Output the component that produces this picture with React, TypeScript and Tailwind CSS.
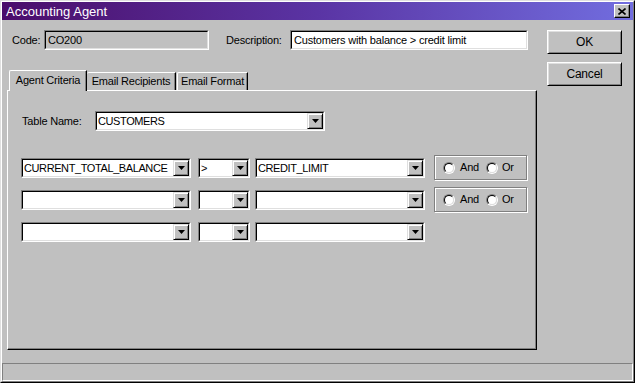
import React from "react";

type BoxProps = {
  className?: string;
  children?: React.ReactNode;
};

const DropButton = () => (
  <div className="flex h-[16px] w-[16px] shrink-0 items-center justify-center border border-t-[#dfdfdf] border-l-[#dfdfdf] border-r-black border-b-black bg-[#c0c0c0] shadow-[inset_1px_1px_0_#fff,inset_-1px_-1px_0_#808080]">
    <svg width="7" height="4" viewBox="0 0 7 4">
      <path d="M0 0h7L3.5 4z" fill="#000" />
    </svg>
  </div>
);

// sunken 2px edge, used for text fields and combos
const Sunken = ({ className, children }: BoxProps) => (
  <div
    className={`h-[20px] shrink-0 border border-t-[#808080] border-l-[#808080] border-r-white border-b-white ${className}`}
  >
    <div className="flex h-full border border-t-black border-l-black border-r-[#dfdfdf] border-b-[#dfdfdf]">
      {children}
    </div>
  </div>
);

const Combo = ({ className, value }: { className: string; value?: string }) => (
  <Sunken className={className}>
    <div className="flex h-full w-full bg-white">
      <span className="flex-1 overflow-hidden whitespace-nowrap pl-[1px] text-[11px] leading-[16px] tracking-[-0.4px] text-black">
        {value}
      </span>
      <DropButton />
    </div>
  </Sunken>
);

const Button = ({ children }: BoxProps) => (
  <div className="flex h-[24px] w-[75px] items-center justify-center border border-t-white border-l-white border-r-black border-b-black bg-[#c0c0c0] text-[12px] text-black shadow-[inset_1px_1px_0_#dfdfdf,inset_-1px_-1px_0_#808080]">
    {children}
  </div>
);

const Radio = () => (
  <span className="block h-[12px] w-[12px] shrink-0 rounded-full border border-t-[#808080] border-l-[#808080] border-r-white border-b-white">
    <span className="block h-full w-full rounded-full border border-t-black border-l-black border-r-[#dfdfdf] border-b-[#dfdfdf] bg-white" />
  </span>
);

const AndOr = () => (
  <div className="flex h-[25px] w-[93px] shrink-0 items-center border border-[#808080] pl-[8px] text-[11px] text-black shadow-[1px_1px_0_#fff,inset_1px_1px_0_#fff]">
    <Radio />
    <span className="ml-[5px]">And</span>
    <span className="ml-[7px]">
      <Radio />
    </span>
    <span className="ml-[4px]">Or</span>
  </div>
);

const CriteriaRow = ({
  field,
  op,
  value,
  joined,
}: {
  field?: string;
  op?: string;
  value?: string;
  joined?: boolean;
}) => (
  <div className="mt-[7px] ml-[13px] flex h-[25px] items-center first:mt-[24px]">
    <Combo className="w-[170px]" value={field} />
    <div className="ml-[7px]">
      <Combo className="w-[52px]" value={op} />
    </div>
    <div className="ml-[5px]">
      <Combo className="w-[170px]" value={value} />
    </div>
    {joined && (
      <div className="ml-[9px]">
        <AndOr />
      </div>
    )}
  </div>
);

export default function App() {
  return (
    <div className="h-[383px] w-[635px] border border-t-[#dfdfdf] border-l-[#dfdfdf] border-r-black border-b-black bg-[#c0c0c0] font-['Liberation_Sans',Arial,sans-serif] tracking-[-0.2px] text-black">
      <div className="flex h-full flex-col border border-t-white border-l-white border-r-[#808080] border-b-[#808080]">
        {/* title bar */}
        <div className="flex h-[18px] shrink-0 items-center bg-linear-to-r from-[#4a0c6b] via-[#5a34a4] to-[#716ddf] pl-[4px] pr-[3px]">
          <span className="flex-1 text-[13px] leading-none tracking-normal text-white">Accounting Agent</span>
          <div className="flex h-[14px] w-[16px] items-center justify-center border border-t-white border-l-white border-r-black border-b-black bg-[#c0c0c0] shadow-[inset_-1px_-1px_0_#808080]">
            <svg width="8" height="7" viewBox="0 0 8 7">
              <path d="M0.5 0.5L7.5 6.5M7.5 0.5L0.5 6.5" stroke="#000" strokeWidth="1.6" />
            </svg>
          </div>
        </div>

        <div className="flex">
          <div className="w-[545px] shrink-0">
            {/* code / description */}
            <div className="mt-[10px] flex h-[20px] items-center text-[11px]">
              <span className="ml-[10px] w-[32px]">Code:</span>
              <Sunken className="w-[165px]">
                <span className="pl-[2px] leading-[16px]">CO200</span>
              </Sunken>
              <span className="ml-[17px] w-[64px]">Description:</span>
              <Sunken className="w-[238px]">
                <span className="w-full bg-white pl-[2px] leading-[16px]">
                  Customers with balance &gt; credit limit
                </span>
              </Sunken>
            </div>

            {/* tabs */}
            <div className="mt-[20px] ml-[5px]">
              <div className="flex h-[20px] items-end pl-[2px] text-[11px]">
                <div className="relative z-10 -mb-[1px] flex h-[21px] w-[78px] items-center justify-center rounded-tl-[2px] border-t border-l border-r border-t-white border-l-white border-r-black bg-[#c0c0c0] pb-[1px] shadow-[inset_-1px_0_0_#808080]">
                  Agent Criteria
                </div>
                <div className="flex h-[18px] w-[89px] items-center justify-center rounded-tl-[2px] border-t border-r border-t-white border-r-black shadow-[inset_-1px_0_0_#808080]">
                  Email Recipients
                </div>
                <div className="ml-[1px] flex h-[18px] w-[71px] items-center justify-center rounded-tl-[2px] border-t border-l border-r border-t-white border-l-white border-r-black shadow-[inset_-1px_0_0_#808080]">
                  Email Format
                </div>
              </div>

              <div className="h-[260px] w-[530px] border border-t-white border-l-white border-r-black border-b-black shadow-[inset_-1px_-1px_0_#808080]">
                <div className="mt-[20px] ml-[14px] flex h-[20px] items-center text-[11px]">
                  <span className="w-[73px]">Table Name:</span>
                  <Combo className="w-[230px]" value="CUSTOMERS" />
                </div>
                <div>
                  <CriteriaRow field="CURRENT_TOTAL_BALANCE" op=">" value="CREDIT_LIMIT" joined />
                  <CriteriaRow joined />
                  <CriteriaRow />
                </div>
              </div>
            </div>
          </div>

          <div className="flex flex-col">
            <div className="mt-[10px]">
              <Button>OK</Button>
            </div>
            <div className="mt-[8px]">
              <Button>Cancel</Button>
            </div>
          </div>
        </div>

        {/* status bar */}
        <div className="mt-auto h-[18px] border border-t-[#808080] border-l-[#808080] border-r-white border-b-white" />
      </div>
    </div>
  );
}
